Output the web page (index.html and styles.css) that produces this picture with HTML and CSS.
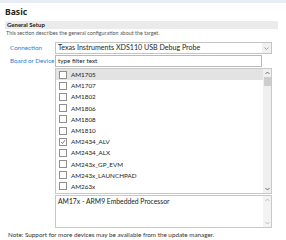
FILE: index.html
```html
<!DOCTYPE html>
<html>
<head>
<meta charset="utf-8">
<link rel="stylesheet" href="styles.css">
</head>
<body>
<div class="topband"></div>
<h1 class="title">Basic</h1>
<div class="section">
  <div class="sec-head">General Setup</div>
  <div class="sec-desc">This section describes the general configuration about the target.</div>
  <div class="form">
    <div class="label">Connection</div>
    <div class="combo">
      <span class="combo-text">Texas Instruments XDS110 USB Debug Probe</span>
      <span class="combo-btn"><svg width="7" height="5" viewBox="0 0 7 5"><path d="M1.5 1.5 L3.5 3.5 L5.5 1.5" fill="none" stroke="#8a8a8a" stroke-width="0.8"/></svg></span>
    </div>
    <div class="label">Board or Device</div>
    <div class="filter-row"><div class="filter">type filter text</div></div>
    <div class="listbox">
      <div class="items">
        <div class="item sel"><span class="cb"></span>AM1705</div>
        <div class="item"><span class="cb"></span>AM1707</div>
        <div class="item"><span class="cb"></span>AM1802</div>
        <div class="item"><span class="cb"></span>AM1806</div>
        <div class="item"><span class="cb"></span>AM1808</div>
        <div class="item"><span class="cb"></span>AM1810</div>
        <div class="item"><span class="cb checked"><svg width="6" height="6" viewBox="0 0 6 6"><path d="M1 3 L2.5 4.5 L5 1.2" fill="none" stroke="#555" stroke-width="0.8"/></svg></span>AM2434_ALV</div>
        <div class="item"><span class="cb"></span>AM2434_ALX</div>
        <div class="item"><span class="cb"></span>AM243x_GP_EVM</div>
        <div class="item"><span class="cb"></span>AM243x_LAUNCHPAD</div>
        <div class="item"><span class="cb"></span>AM263x</div>
      </div>
      <div class="vscroll">
        <svg class="arrow" width="7" height="6" viewBox="0 0 7 6"><path d="M1.5 4 L3.5 2 L5.5 4" fill="none" stroke="#606060" stroke-width="0.9"/></svg>
        <div class="thumb"></div>
        <div class="track"></div>
        <svg class="arrow" width="7" height="6" viewBox="0 0 7 6"><path d="M1.5 2 L3.5 4 L5.5 2" fill="none" stroke="#606060" stroke-width="0.9"/></svg>
      </div>
    </div>
    <div class="descbox">
      <div class="desc-text">AM17x - ARM9 Embedded Processor</div>
      <div class="vscroll light">
        <svg class="arrow" width="7" height="6" viewBox="0 0 7 6"><path d="M1.5 4 L3.5 2 L5.5 4" fill="none" stroke="#b8b8b8" stroke-width="0.9"/></svg>
        <div class="track"></div>
        <svg class="arrow" width="7" height="6" viewBox="0 0 7 6"><path d="M1.5 2 L3.5 4 L5.5 2" fill="none" stroke="#b8b8b8" stroke-width="0.9"/></svg>
      </div>
    </div>
  </div>
  <div class="note">Note: Support for more devices may be available from the update manager.</div>
</div>
</body>
</html>
```
FILE: styles.css
```css
html, body {
  margin: 0;
  padding: 0;
  background: #ffffff;
}
body {
  font-family: "Lato", "Noto Sans", sans-serif;
  font-size: 6.3px;
  color: #1e1e1e;
  width: 286px;
  height: 240px;
  overflow: hidden;
}
.topband {
  height: 3px;
  background: #e9edf5;
}
.title {
  margin: 0;
  padding: 3px 0 0 5px;
  height: 15px;
  box-sizing: border-box;
  font-family: "Noto Sans", sans-serif;
  font-size: 8.6px;
  font-weight: bold;
  line-height: 12px;
  color: #262626;
}
.section {
  margin: 3px 8px 0 5px;
}
.sec-head {
  background: #ebebeb;
  height: 8px;
  line-height: 8px;
  padding-left: 2px;
  font-weight: bold;
  font-size: 6px;
  color: #222;
}
.sec-desc {
  height: 13px;
  line-height: 9px;
  padding-left: 1px;
  font-size: 5.4px;
  color: #555;
  white-space: nowrap;
}
.form {
  display: grid;
  grid-template-columns: 50px 217px;
  row-gap: 1px;
  align-items: center;
}
.label {
  color: #2f7bd8;
  padding-left: 5px;
  line-height: 12px;
  white-space: nowrap;
}
.combo {
  height: 12px;
  box-sizing: border-box;
  border: 1px solid #c4c4c4;
  display: flex;
  align-items: center;
  background: #fff;
}
.combo-text {
  flex: 1;
  padding-left: 2px;
  line-height: 10px;
  font-size: 7.1px;
  color: #1e1e1e;
  white-space: nowrap;
}
.combo-btn {
  width: 9px;
  height: 10px;
  background: #f0f0f0;
  display: flex;
  align-items: center;
  justify-content: center;
}
.filter-row {
  display: flex;
}
.filter {
  width: 207px;
  height: 12px;
  box-sizing: border-box;
  border: 1px solid #b9b9b9;
  padding-left: 2px;
  line-height: 10px;
  color: #1e1e1e;
}
.listbox {
  grid-column: 2;
  height: 126px;
  box-sizing: border-box;
  border: 1px solid #c8c8c8;
  display: flex;
}
.items {
  flex: 1;
  overflow: hidden;
}
.item {
  height: 11.2px;
  display: flex;
  align-items: center;
  padding-left: 3px;
  color: #222;
  white-space: nowrap;
}
.item.sel {
  background: #e3e3e3;
}
.cb {
  width: 6px;
  height: 6px;
  border: 1px solid #8f8f8f;
  background: #fff;
  margin-right: 4px;
  display: flex;
  align-items: center;
  justify-content: center;
  flex: none;
}
.cb svg {
  display: block;
}
.vscroll {
  width: 8px;
  background: #efefef;
  display: flex;
  flex-direction: column;
  align-items: center;
}
.arrow {
  display: block;
  flex: none;
  margin: 1px 0;
}
.thumb {
  width: 7px;
  height: 9px;
  background: #cdcdcd;
  flex: none;
}
.track {
  flex: 1;
}
.descbox {
  grid-column: 2;
  height: 33px;
  box-sizing: border-box;
  border: 1px solid #c8c8c8;
  display: flex;
}
.desc-text {
  flex: 1;
  padding: 1px 2px;
  line-height: 8px;
  font-size: 6.8px;
  color: #222;
}
.vscroll.light {
  background: #f3f3f3;
}
.note {
  margin-top: 3px;
  padding-left: 3px;
  line-height: 8px;
  color: #333;
  white-space: nowrap;
}
```
